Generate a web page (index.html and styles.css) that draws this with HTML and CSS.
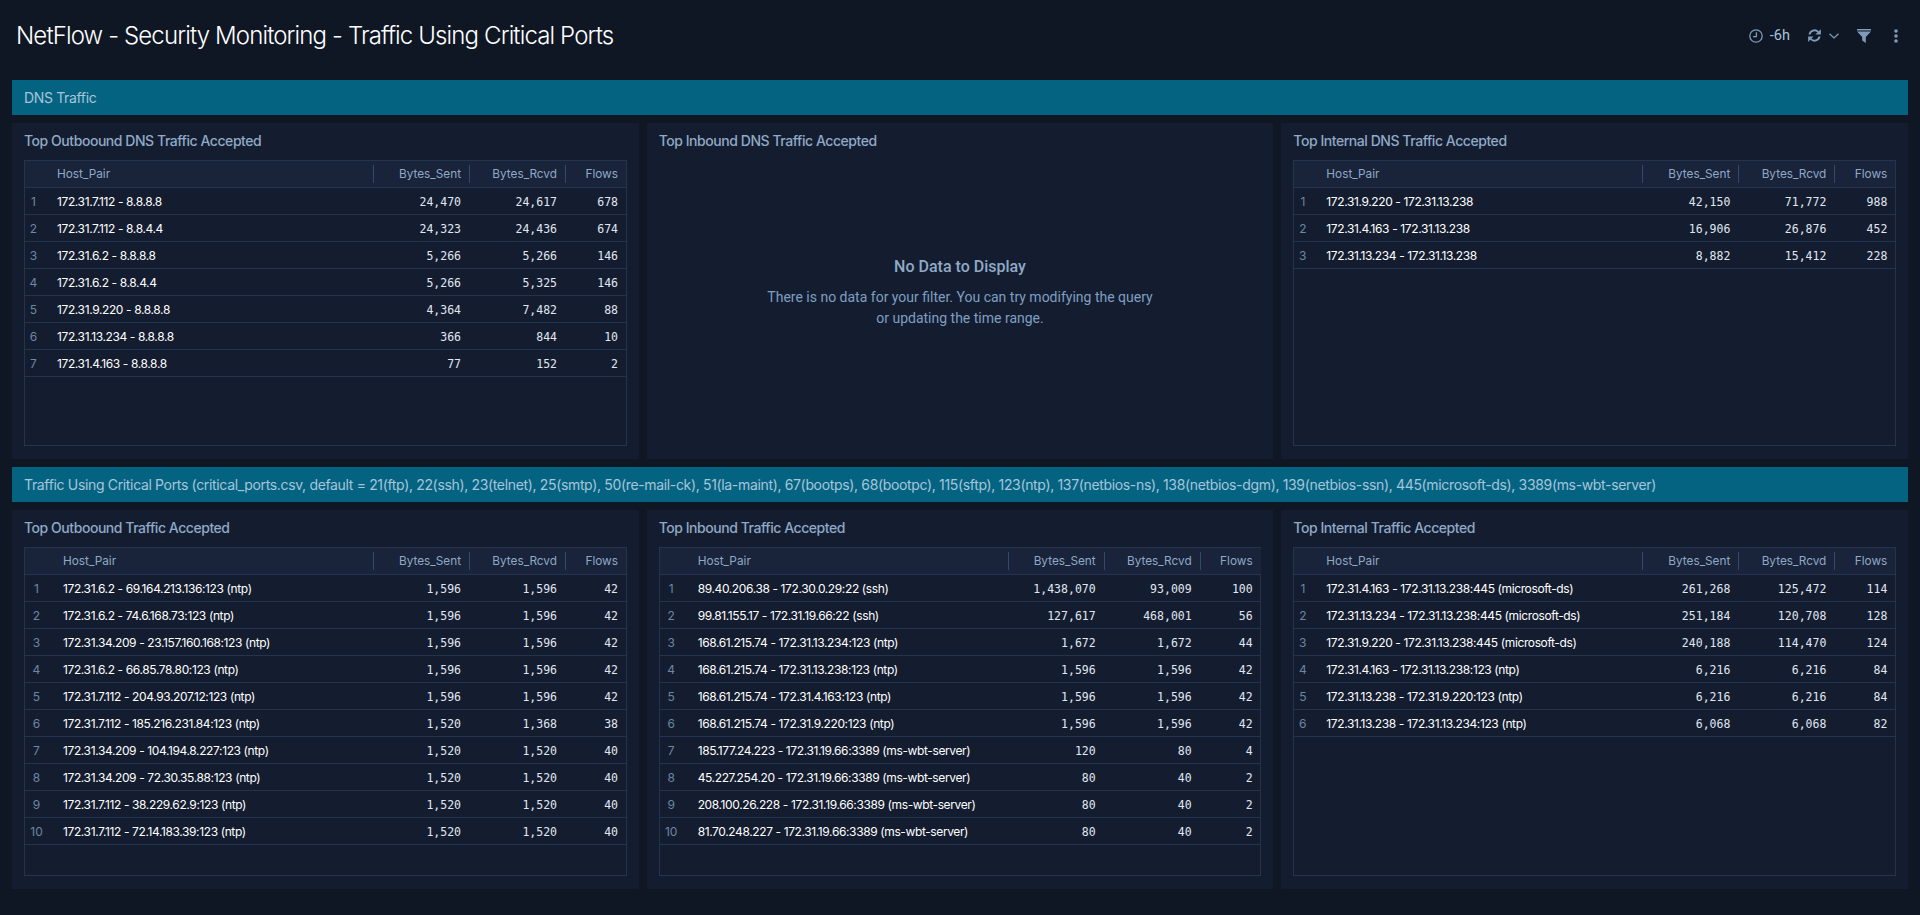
FILE: index.html
```html
<!DOCTYPE html>
<html lang="en">
<head>
<meta charset="utf-8">
<title>NetFlow - Security Monitoring - Traffic Using Critical Ports</title>
<link rel="stylesheet" href="styles.css">
</head>
<body>
<header class="topbar">
  <h1 class="page-title">NetFlow - Security Monitoring - Traffic Using Critical Ports</h1>
  <div class="tools">
    <svg class="ic clock" viewBox="0 0 14 14" width="14" height="14"><circle cx="7" cy="7" r="6.2" fill="none" stroke="currentColor" stroke-width="1.3"/><path d="M7.4 3.2V7.6H4" fill="none" stroke="currentColor" stroke-width="1.3"/></svg>
    <span class="range">-6h</span>
    <svg class="ic sync" viewBox="0 0 16 16" width="15" height="15"><path d="M1.6 7a6.5 6.5 0 0 1 11-3.6L14.8 1.2V7H9l2.2-2.2A4.5 4.5 0 0 0 3.7 7zM14.4 9a6.5 6.5 0 0 1-11 3.6L1.2 14.8V9H7l-2.2 2.2A4.5 4.5 0 0 0 12.3 9z" fill="currentColor"/></svg>
    <svg class="ic chev" viewBox="0 0 10 6" width="10" height="6"><path d="M.5.7 5 5 9.5.7" fill="none" stroke="currentColor" stroke-width="1.2"/></svg>
    <svg class="ic filter" viewBox="0 0 14 14" width="14" height="14"><path d="M0 0h14v1.5H0zM0 2.6h14L8.8 8v6L5.2 11.5V8z" fill="currentColor"/></svg>
    <svg class="ic dots" viewBox="0 0 4 14" width="4" height="14"><circle cx="2" cy="2" r="1.8" fill="currentColor"/><circle cx="2" cy="7" r="1.8" fill="currentColor"/><circle cx="2" cy="12" r="1.8" fill="currentColor"/></svg>
  </div>
</header>

<main class="board">
  <div class="banner">DNS Traffic</div>
  <section class="grid grid-top">
    <article class="panel">
      <h2 class="panel-title">Top Outboound DNS Traffic Accepted</h2>
      <div class="tbl-box">
        <table class="tbl narrow">
          <colgroup><col class="c-idx"><col class="c-host"><col class="c-num"><col class="c-num"><col class="c-flow"></colgroup>
          <thead><tr><th></th><th class="l"><span>Host_Pair</span></th><th><span>Bytes_Sent</span></th><th><span>Bytes_Rcvd</span></th><th class="last"><span>Flows</span></th></tr></thead>
          <tbody>
            <tr><td class="idx">1</td><td class="host">172.31.7.112 - 8.8.8.8</td><td class="num">24,470</td><td class="num">24,617</td><td class="num">678</td></tr>
            <tr><td class="idx">2</td><td class="host">172.31.7.112 - 8.8.4.4</td><td class="num">24,323</td><td class="num">24,436</td><td class="num">674</td></tr>
            <tr><td class="idx">3</td><td class="host">172.31.6.2 - 8.8.8.8</td><td class="num">5,266</td><td class="num">5,266</td><td class="num">146</td></tr>
            <tr><td class="idx">4</td><td class="host">172.31.6.2 - 8.8.4.4</td><td class="num">5,266</td><td class="num">5,325</td><td class="num">146</td></tr>
            <tr><td class="idx">5</td><td class="host">172.31.9.220 - 8.8.8.8</td><td class="num">4,364</td><td class="num">7,482</td><td class="num">88</td></tr>
            <tr><td class="idx">6</td><td class="host">172.31.13.234 - 8.8.8.8</td><td class="num">366</td><td class="num">844</td><td class="num">10</td></tr>
            <tr><td class="idx">7</td><td class="host">172.31.4.163 - 8.8.8.8</td><td class="num">77</td><td class="num">152</td><td class="num">2</td></tr>
          </tbody>
        </table>
      </div>
    </article>
    <article class="panel">
      <h2 class="panel-title">Top Inbound DNS Traffic Accepted</h2>
      <div class="empty">
        <h3 class="empty-title">No Data to Display</h3>
        <p class="empty-text">There is no data for your filter. You can try modifying the query<br>or updating the time range.</p>
      </div>
    </article>
    <article class="panel">
      <h2 class="panel-title">Top Internal DNS Traffic Accepted</h2>
      <div class="tbl-box">
        <table class="tbl narrow">
          <colgroup><col class="c-idx"><col class="c-host"><col class="c-num"><col class="c-num"><col class="c-flow"></colgroup>
          <thead><tr><th></th><th class="l"><span>Host_Pair</span></th><th><span>Bytes_Sent</span></th><th><span>Bytes_Rcvd</span></th><th class="last"><span>Flows</span></th></tr></thead>
          <tbody>
            <tr><td class="idx">1</td><td class="host">172.31.9.220 - 172.31.13.238</td><td class="num">42,150</td><td class="num">71,772</td><td class="num">988</td></tr>
            <tr><td class="idx">2</td><td class="host">172.31.4.163 - 172.31.13.238</td><td class="num">16,906</td><td class="num">26,876</td><td class="num">452</td></tr>
            <tr><td class="idx">3</td><td class="host">172.31.13.234 - 172.31.13.238</td><td class="num">8,882</td><td class="num">15,412</td><td class="num">228</td></tr>
          </tbody>
        </table>
      </div>
    </article>
  </section>

  <div class="banner">Traffic Using Critical Ports (critical_ports.csv, default = 21(ftp), 22(ssh), 23(telnet), 25(smtp), 50(re-mail-ck), 51(la-maint), 67(bootps), 68(bootpc), 115(sftp), 123(ntp), 137(netbios-ns), 138(netbios-dgm), 139(netbios-ssn), 445(microsoft-ds), 3389(ms-wbt-server)</div>
  <section class="grid grid-bottom">
    <article class="panel">
      <h2 class="panel-title">Top Outboound Traffic Accepted</h2>
      <div class="tbl-box">
        <table class="tbl wide">
          <colgroup><col class="c-idx"><col class="c-host"><col class="c-num"><col class="c-num"><col class="c-flow"></colgroup>
          <thead><tr><th></th><th class="l"><span>Host_Pair</span></th><th><span>Bytes_Sent</span></th><th><span>Bytes_Rcvd</span></th><th class="last"><span>Flows</span></th></tr></thead>
          <tbody>
            <tr><td class="idx">1</td><td class="host">172.31.6.2 - 69.164.213.136:123 (ntp)</td><td class="num">1,596</td><td class="num">1,596</td><td class="num">42</td></tr>
            <tr><td class="idx">2</td><td class="host">172.31.6.2 - 74.6.168.73:123 (ntp)</td><td class="num">1,596</td><td class="num">1,596</td><td class="num">42</td></tr>
            <tr><td class="idx">3</td><td class="host">172.31.34.209 - 23.157.160.168:123 (ntp)</td><td class="num">1,596</td><td class="num">1,596</td><td class="num">42</td></tr>
            <tr><td class="idx">4</td><td class="host">172.31.6.2 - 66.85.78.80:123 (ntp)</td><td class="num">1,596</td><td class="num">1,596</td><td class="num">42</td></tr>
            <tr><td class="idx">5</td><td class="host">172.31.7.112 - 204.93.207.12:123 (ntp)</td><td class="num">1,596</td><td class="num">1,596</td><td class="num">42</td></tr>
            <tr><td class="idx">6</td><td class="host">172.31.7.112 - 185.216.231.84:123 (ntp)</td><td class="num">1,520</td><td class="num">1,368</td><td class="num">38</td></tr>
            <tr><td class="idx">7</td><td class="host">172.31.34.209 - 104.194.8.227:123 (ntp)</td><td class="num">1,520</td><td class="num">1,520</td><td class="num">40</td></tr>
            <tr><td class="idx">8</td><td class="host">172.31.34.209 - 72.30.35.88:123 (ntp)</td><td class="num">1,520</td><td class="num">1,520</td><td class="num">40</td></tr>
            <tr><td class="idx">9</td><td class="host">172.31.7.112 - 38.229.62.9:123 (ntp)</td><td class="num">1,520</td><td class="num">1,520</td><td class="num">40</td></tr>
            <tr><td class="idx">10</td><td class="host">172.31.7.112 - 72.14.183.39:123 (ntp)</td><td class="num">1,520</td><td class="num">1,520</td><td class="num">40</td></tr>
          </tbody>
        </table>
      </div>
    </article>
    <article class="panel">
      <h2 class="panel-title">Top Inbound Traffic Accepted</h2>
      <div class="tbl-box">
        <table class="tbl wide">
          <colgroup><col class="c-idx"><col class="c-host"><col class="c-num"><col class="c-num"><col class="c-flow"></colgroup>
          <thead><tr><th></th><th class="l"><span>Host_Pair</span></th><th><span>Bytes_Sent</span></th><th><span>Bytes_Rcvd</span></th><th class="last"><span>Flows</span></th></tr></thead>
          <tbody>
            <tr><td class="idx">1</td><td class="host">89.40.206.38 - 172.30.0.29:22 (ssh)</td><td class="num">1,438,070</td><td class="num">93,009</td><td class="num">100</td></tr>
            <tr><td class="idx">2</td><td class="host">99.81.155.17 - 172.31.19.66:22 (ssh)</td><td class="num">127,617</td><td class="num">468,001</td><td class="num">56</td></tr>
            <tr><td class="idx">3</td><td class="host">168.61.215.74 - 172.31.13.234:123 (ntp)</td><td class="num">1,672</td><td class="num">1,672</td><td class="num">44</td></tr>
            <tr><td class="idx">4</td><td class="host">168.61.215.74 - 172.31.13.238:123 (ntp)</td><td class="num">1,596</td><td class="num">1,596</td><td class="num">42</td></tr>
            <tr><td class="idx">5</td><td class="host">168.61.215.74 - 172.31.4.163:123 (ntp)</td><td class="num">1,596</td><td class="num">1,596</td><td class="num">42</td></tr>
            <tr><td class="idx">6</td><td class="host">168.61.215.74 - 172.31.9.220:123 (ntp)</td><td class="num">1,596</td><td class="num">1,596</td><td class="num">42</td></tr>
            <tr><td class="idx">7</td><td class="host">185.177.24.223 - 172.31.19.66:3389 (ms-wbt-server)</td><td class="num">120</td><td class="num">80</td><td class="num">4</td></tr>
            <tr><td class="idx">8</td><td class="host">45.227.254.20 - 172.31.19.66:3389 (ms-wbt-server)</td><td class="num">80</td><td class="num">40</td><td class="num">2</td></tr>
            <tr><td class="idx">9</td><td class="host">208.100.26.228 - 172.31.19.66:3389 (ms-wbt-server)</td><td class="num">80</td><td class="num">40</td><td class="num">2</td></tr>
            <tr><td class="idx">10</td><td class="host">81.70.248.227 - 172.31.19.66:3389 (ms-wbt-server)</td><td class="num">80</td><td class="num">40</td><td class="num">2</td></tr>
          </tbody>
        </table>
      </div>
    </article>
    <article class="panel">
      <h2 class="panel-title">Top Internal Traffic Accepted</h2>
      <div class="tbl-box">
        <table class="tbl narrow">
          <colgroup><col class="c-idx"><col class="c-host"><col class="c-num"><col class="c-num"><col class="c-flow"></colgroup>
          <thead><tr><th></th><th class="l"><span>Host_Pair</span></th><th><span>Bytes_Sent</span></th><th><span>Bytes_Rcvd</span></th><th class="last"><span>Flows</span></th></tr></thead>
          <tbody>
            <tr><td class="idx">1</td><td class="host">172.31.4.163 - 172.31.13.238:445 (microsoft-ds)</td><td class="num">261,268</td><td class="num">125,472</td><td class="num">114</td></tr>
            <tr><td class="idx">2</td><td class="host">172.31.13.234 - 172.31.13.238:445 (microsoft-ds)</td><td class="num">251,184</td><td class="num">120,708</td><td class="num">128</td></tr>
            <tr><td class="idx">3</td><td class="host">172.31.9.220 - 172.31.13.238:445 (microsoft-ds)</td><td class="num">240,188</td><td class="num">114,470</td><td class="num">124</td></tr>
            <tr><td class="idx">4</td><td class="host">172.31.4.163 - 172.31.13.238:123 (ntp)</td><td class="num">6,216</td><td class="num">6,216</td><td class="num">84</td></tr>
            <tr><td class="idx">5</td><td class="host">172.31.13.238 - 172.31.9.220:123 (ntp)</td><td class="num">6,216</td><td class="num">6,216</td><td class="num">84</td></tr>
            <tr><td class="idx">6</td><td class="host">172.31.13.238 - 172.31.13.234:123 (ntp)</td><td class="num">6,068</td><td class="num">6,068</td><td class="num">82</td></tr>
          </tbody>
        </table>
      </div>
    </article>
  </section>
</main>
</body>
</html>
```

FILE: styles.css
```css
* { box-sizing: border-box; }
html, body { margin: 0; padding: 0; }
body {
  width: 1920px;
  height: 915px;
  overflow: hidden;
  background: #0f1725;
  font-family: Inter, "Liberation Sans", sans-serif;
  color: #fff;
}
.topbar {
  height: 80px;
  padding: 0 22px 10px 16px;
  display: flex;
  align-items: center;
  justify-content: space-between;
}
.page-title {
  margin: 0;
  font-size: 24px;
  font-weight: 300;
  letter-spacing: -0.87px;
  color: #fff;
}
.tools {
  display: flex;
  align-items: center;
  margin-top: 1px;
  color: #7f9bb8;
}
.range {
  margin: 0 17px 0 7px;
  font-family: Roboto, sans-serif;
  font-size: 14.5px;
  font-weight: 400;
  color: #a9c3dc;
}
.chev { margin-left: 7px; }
.filter { margin-left: 18px; }
.dots { margin-left: 23px; }
.board {
  padding: 0 12px;
  display: flex;
  flex-direction: column;
  gap: 8px;
}
.banner {
  height: 35px;
  padding-left: 12px;
  background: #056382;
  color: #a5c5d9;
  font-size: 14px;
  font-weight: 400;
  letter-spacing: -0.34px;
  line-height: 35px;
  white-space: nowrap;
}
.grid {
  display: grid;
  grid-template-columns: repeat(3, 1fr);
  gap: 8px;
}
.grid-top { height: 336px; }
.grid-bottom { height: 379px; }
.panel {
  background: #141d30;
  padding: 0 12px 13px;
  display: flex;
  flex-direction: column;
  min-width: 0;
}
.panel-title {
  margin: 0;
  height: 37px;
  font-size: 14px;
  font-weight: 500;
  letter-spacing: -0.45px;
  line-height: 36px;
  color: #8fa9c6;
}
.tbl-box {
  flex: 1;
  border: 1px solid #24344f;
  background: #141d30;
}
.tbl {
  width: 601px;
  table-layout: fixed;
  border-collapse: collapse;
}
.c-num { width: 96px; }
.c-flow { width: 60px; }
.narrow .c-idx { width: 32px; }
.narrow .c-host { width: 317px; }
.wide .c-idx { width: 38px; }
.wide .c-host { width: 311px; }
.tbl th {
  height: 26px;
  padding: 0;
  background: #19233a;
  border-bottom: 1px solid #24344f;
  font-size: 11.8px;
  font-weight: 400;
  color: #8fa9c6;
  text-align: right;
}
.tbl th span {
  display: block;
  height: 18px;
  line-height: 18px;
  padding-right: 8px;
  border-right: 1px solid #33496a;
}
.tbl th.l { text-align: left; }
.tbl th.last span { border-right: 0; }
.tbl td {
  height: 27px;
  padding: 1px 0 0;
  border-bottom: 1px solid #24344f;
  white-space: nowrap;
}
.tbl td.idx {
  font-size: 12px;
  color: #6c86a3;
  padding-right: 15px;
  text-align: center;
}
.tbl td.host {
  font-size: 12px;
  font-weight: 400;
  letter-spacing: -0.38px;
  color: #fff;
}
.tbl td.num {
  font-family: "DejaVu Sans Mono", monospace;
  font-size: 11.5px;
  color: #e0e7f0;
  text-align: right;
  padding-top: 2px;
  padding-right: 9px;
}
.tbl td.num:last-child { padding-right: 8px; }
.empty {
  flex: 1;
  display: flex;
  flex-direction: column;
  align-items: center;
  padding-top: 97px;
  font-family: Roboto, sans-serif;
  text-align: center;
  color: #7f9fc2;
}
.empty-title {
  margin: 0;
  font-size: 16px;
  font-weight: 500;
  line-height: 20px;
  color: #8fa9c6;
}
.empty-text {
  margin: 10px 0 0;
  font-size: 14px;
  line-height: 21px;
}
```
